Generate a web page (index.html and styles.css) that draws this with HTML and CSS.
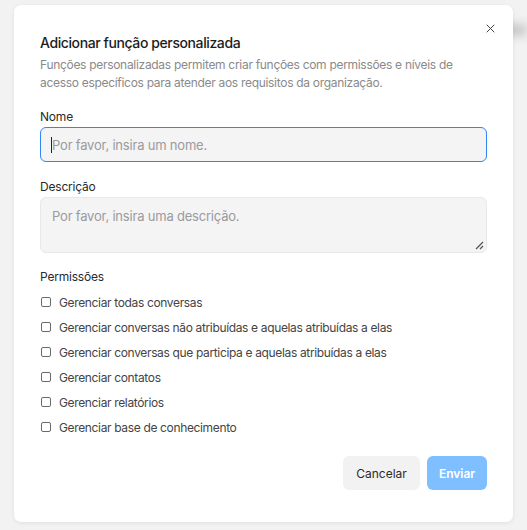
FILE: index.html
```html
<!DOCTYPE html>
<html lang="pt">
<head>
<meta charset="utf-8">
<link rel="stylesheet" href="styles.css">
</head>
<body>
<div class="backdrop-bar"></div>
<div class="modal">
  <button class="close" aria-label="Fechar">
    <svg width="9" height="9" viewBox="0 0 9 9"><path d="M1 1L8 8M8 1L1 8" stroke="#444" stroke-width="1" stroke-linecap="round"/></svg>
  </button>
  <h1 class="title">Adicionar função personalizada</h1>
  <p class="desc">Funções personalizadas permitem criar funções com permissões e níveis de acesso específicos para atender aos requisitos da organização.</p>

  <div class="field">
    <label class="label">Nome</label>
    <div class="input focused"><span class="caret"></span><span class="ph">Por favor, insira um nome.</span></div>
  </div>

  <div class="field">
    <label class="label">Descrição</label>
    <div class="textarea"><span class="ph">Por favor, insira uma descrição.</span>
      <svg class="grip" width="9" height="9" viewBox="0 0 9 9"><path d="M8 1L1 8M8 5L5 8" stroke="#555" stroke-width="1.3"/></svg>
    </div>
  </div>

  <div class="perms">
    <div class="label perms-title">Permissões</div>
    <ul class="list">
      <li><span class="box"></span>Gerenciar todas conversas</li>
      <li><span class="box"></span>Gerenciar conversas não atribuídas e aquelas atribuídas a elas</li>
      <li><span class="box"></span>Gerenciar conversas que participa e aquelas atribuídas a elas</li>
      <li><span class="box"></span>Gerenciar contatos</li>
      <li><span class="box"></span>Gerenciar relatórios</li>
      <li><span class="box"></span>Gerenciar base de conhecimento</li>
    </ul>
  </div>

  <div class="actions">
    <button class="btn cancel">Cancelar</button>
    <button class="btn submit">Enviar</button>
  </div>
</div>
</body>
</html>
```
FILE: styles.css
```css
* { box-sizing: border-box; }
html, body { margin: 0; padding: 0; }
body {
  width: 527px;
  height: 530px;
  background: #f2f2f2;
  font-family: Inter, "Noto Sans", sans-serif;
  overflow: hidden;
  position: relative;
}
.backdrop-bar {
  position: absolute;
  left: 200px;
  right: 0;
  top: 24px;
  height: 12px;
  background: #c8c8c8;
  filter: blur(5px);
}
.modal {
  position: relative;
  margin: 5px 0 0 14px;
  width: 499px;
  height: 517px;
  background: #fff;
  border-radius: 7px;
  box-shadow: 0 1px 4px rgba(0,0,0,0.08);
  padding: 28px 26px 0 26px;
}
.close {
  position: absolute;
  right: 16px;
  top: 16px;
  width: 14px;
  height: 14px;
  padding: 0;
  border: 0;
  background: transparent;
  display: flex;
  align-items: center;
  justify-content: center;
}
.title {
  margin: 0;
  font-size: 14px;
  font-weight: 500;
  color: #1c1c1c;
  line-height: 20px;
  letter-spacing: -0.4px;
}
.desc {
  margin: 3px 0 0;
  font-size: 12px;
  line-height: 18px;
  color: #8a8a8a;
  letter-spacing: -0.3px;
}
.field { margin-top: 16px; display: flex; flex-direction: column; }
.field + .field { margin-top: 16px; }
.label {
  font-size: 12px;
  line-height: 18px;
  color: #2a2a2a;
  letter-spacing: -0.2px;
}
.input {
  margin-top: 1px;
  height: 35px;
  border: 1px solid #e6e6e6;
  border-radius: 6px;
  background: #f4f4f4;
  display: flex;
  align-items: center;
  padding: 0 10px;
}
.input.focused { border-color: #2f86f6; }
.caret { width: 1px; height: 16px; background: #222; }
.ph {
  font-size: 13px;
  color: #9a9a9f;
  letter-spacing: -0.2px;
}
.textarea {
  position: relative;
  margin-top: 1px;
  height: 56px;
  border: 1px solid #e8e8e8;
  border-radius: 6px;
  background: #f4f4f4;
  padding: 8px 11px;
  line-height: 18px;
}
.grip { position: absolute; right: 2px; bottom: 2px; }
.perms { margin-top: 15px; }
.perms-title { line-height: 18px; }
.list { list-style: none; margin: 7px 0 0; padding: 0; display: flex; flex-direction: column; gap: 7px; }
.list li {
  display: flex;
  align-items: center;
  height: 18px;
  font-size: 12px;
  color: #444;
  letter-spacing: -0.35px;
}
.box {
  width: 10px;
  height: 10px;
  border: 1px solid #6a6a6a;
  border-radius: 2px;
  margin: 0 8px 0 1px;
  flex: none;
}
.actions {
  margin-top: 20px;
  display: flex;
  justify-content: flex-end;
  gap: 7px;
}
.btn {
  height: 34px;
  border: 0;
  border-radius: 6px;
  font-family: inherit;
  font-size: 12px;
  padding: 0;
}
.cancel { width: 77px; background: #f2f2f2; color: #2a2a2a; }
.submit { width: 60px; background: #80bfff; color: #fff; font-weight: 600; }
```
